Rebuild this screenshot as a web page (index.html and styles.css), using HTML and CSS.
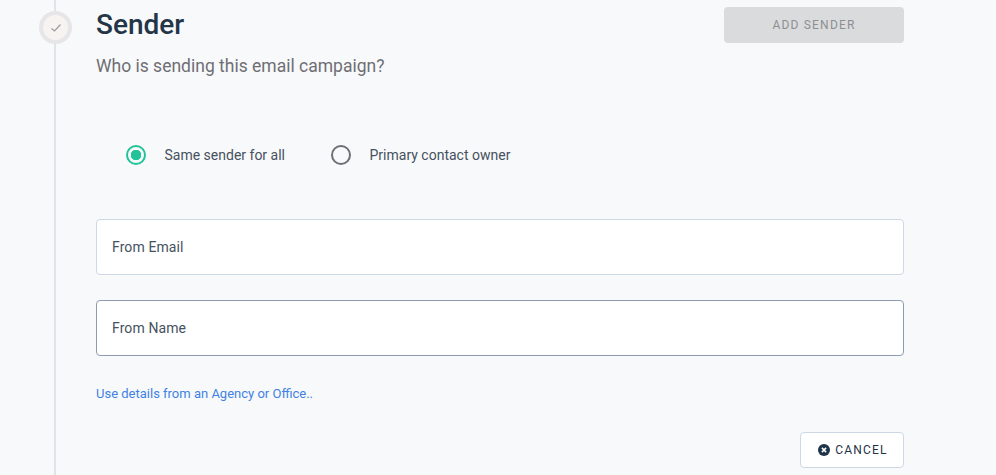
FILE: index.html
```html
<!DOCTYPE html>
<html lang="en">
<head>
  <meta charset="UTF-8">
  <meta name="viewport" content="width=device-width, initial-scale=1.0">
  <title>Sender</title>
  <link rel="stylesheet" href="styles.css">
</head>
<body>
  <div class="step">
    <div class="timeline">
      <div class="step-dot">
        <svg width="12" height="10" viewBox="0 0 12 10"><path d="M1.5 5.5 L4.5 8 L10.5 1.5" fill="none" stroke="#9a9ca3" stroke-width="1.2"/></svg>
      </div>
    </div>
    <div class="content">
      <div class="head">
        <div>
          <h1 class="title">Sender</h1>
          <p class="subtitle">Who is sending this email campaign?</p>
        </div>
        <button class="btn-add" disabled>ADD SENDER</button>
      </div>

      <div class="radios">
        <label class="radio checked"><span class="radio-mark"></span>Same sender for all</label>
        <label class="radio"><span class="radio-mark"></span>Primary contact owner</label>
      </div>

      <input class="field" type="text" placeholder="From Email">
      <input class="field field-active" type="text" placeholder="From Name">

      <a class="details-link" href="#">Use details from an Agency or Office..</a>

      <div class="actions">
        <button class="btn-cancel">
          <svg width="12" height="12" viewBox="0 0 12 12"><circle cx="6" cy="6" r="6" fill="#1f3349"/><path d="M3.9 3.9 L8.1 8.1 M8.1 3.9 L3.9 8.1" stroke="#fff" stroke-width="1.5"/></svg>
          CANCEL
        </button>
      </div>
    </div>
  </div>
</body>
</html>
```

FILE: styles.css
```css
html, body {
  height: 475px;
  overflow: hidden;
}

body {
  margin: 0;
  font-family: Roboto, Arial, sans-serif;
  background-color: #f8f9fb;
  color: #3f4a59;
}

.step {
  display: flex;
  height: 475px;
}

.timeline {
  width: 96px;
  flex-shrink: 0;
  position: relative;
}

.timeline::before {
  content: "";
  position: absolute;
  left: 54px;
  top: 0;
  bottom: 0;
  width: 2px;
  background: #e2e3e6;
}

.step-dot {
  position: absolute;
  left: 39px;
  top: 11px;
  width: 33px;
  height: 33px;
  box-sizing: border-box;
  border: 4px solid #e6e6e8;
  border-radius: 50%;
  background: #f7f3f1;
  display: flex;
  align-items: center;
  justify-content: center;
}

.content {
  width: 808px;
}

.head {
  display: flex;
  justify-content: space-between;
  align-items: flex-start;
  padding-top: 7px;
}

.title {
  margin: 0;
  font-size: 28px;
  font-weight: 500;
  line-height: 36px;
  color: #243548;
}

.subtitle {
  margin: 8px 0 0;
  font-size: 17.5px;
  line-height: 30px;
  color: #6f6e74;
}

.btn-add {
  width: 180px;
  height: 36px;
  border: none;
  border-radius: 4px;
  background: #dadbdd;
  color: #8e8f92;
  font-family: inherit;
  font-size: 12px;
  font-weight: 400;
  letter-spacing: 1.2px;
}

.radios {
  display: flex;
  gap: 46px;
  padding-left: 30px;
  margin-top: 62px;
  height: 24px;
}

.radio {
  display: flex;
  align-items: center;
  gap: 18.5px;
  font-size: 14px;
  color: #465160;
}

.radio-mark {
  width: 20px;
  height: 20px;
  box-sizing: border-box;
  border: 2px solid #707074;
  border-radius: 50%;
}

.radio.checked .radio-mark {
  border-color: #22c39a;
  background: radial-gradient(circle, #22c39a 0 5px, transparent 5.5px);
}

.field {
  display: block;
  width: 100%;
  height: 56px;
  box-sizing: border-box;
  margin-top: 25px;
  padding: 0 15px;
  border: 1px solid #cdd8e5;
  border-radius: 4px;
  background: #fff;
  font-family: inherit;
  font-size: 14px;
  letter-spacing: 0.1px;
}

.radios + .field {
  margin-top: 52px;
}

.field::placeholder {
  color: #465160;
  opacity: 1;
}

.field-active {
  border-color: #8b9cb1;
}

.details-link {
  display: block;
  margin-top: 29px;
  font-size: 13px;
  line-height: 18px;
  color: #3f82e3;
  text-decoration: none;
}

.actions {
  display: flex;
  justify-content: flex-end;
  margin-top: 29px;
}

.btn-cancel {
  width: 104px;
  height: 36px;
  display: flex;
  align-items: center;
  justify-content: center;
  gap: 5px;
  padding: 0 0 1px 2px;
  border: 1px solid #cdd8e5;
  border-radius: 4px;
  background: #fff;
  color: #1f3349;
  font-family: inherit;
  font-size: 12px;
  font-weight: 400;
  letter-spacing: 1.2px;
}
```
